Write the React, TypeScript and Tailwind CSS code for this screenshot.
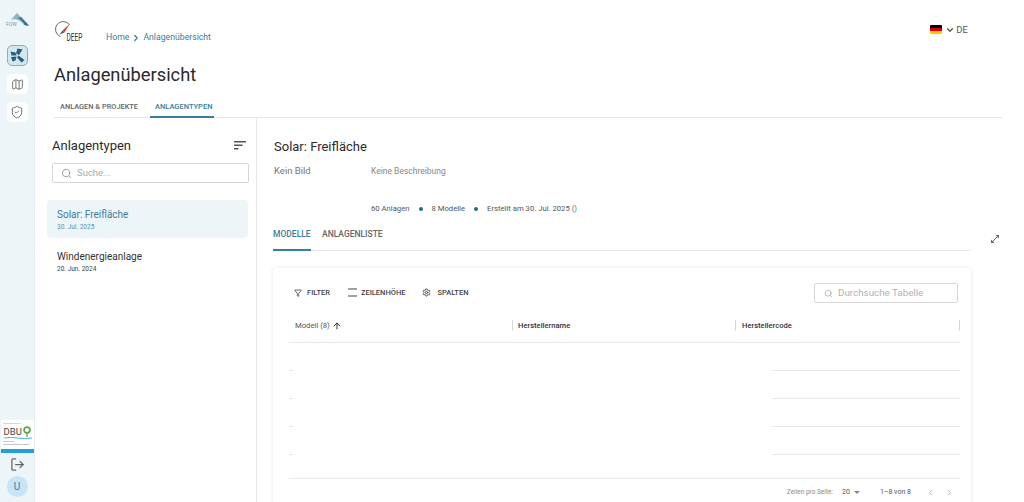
import React from "react";
import { ArrowUp, ChevronDown, ChevronLeft, ChevronRight, LogOut, Map, Search, Settings, ShieldCheck, Filter } from "lucide-react";

function Row() {
  return (
    <div className="h-[28px] flex items-end">
      <div className="w-[483px] flex"><div className="w-[4px] h-px bg-[#e5e5e5]" /></div>
      <div className="w-[188px] h-px bg-[#e8e8e8]" />
    </div>
  );
}

function Sep() {
  return <div className="w-px h-[11px] bg-[#d8d8d8]" />;
}

export default function App() {
  return (
    <div className="w-[1024px] h-[502px] overflow-hidden flex bg-white text-[#222] font-['Roboto',sans-serif]">
      {/* Rail */}
      <aside className="w-[35px] shrink-0 h-full bg-[#eef5f9] flex flex-col items-center border-r border-[#e6edf1]">
        <div className="mt-[12px] h-[16px] w-[24px] flex flex-col items-center">
          <svg width="24" height="16" viewBox="0 0 24 16">
            <path d="M6 7.5 L12 1 L24 13.5 L19 13 Q14 6 6 7.5Z" fill="#8fb6c8" />
            <path d="M12 6 Q17 7 20 13.5 L24 13.5 L16 5 Z" fill="#2f7492" />
            <text x="1" y="14" fontSize="5" fill="#6c98ac" fontFamily="Roboto">FOW</text>
          </svg>
        </div>
        <button className="mt-[17px] w-[21px] h-[21px] rounded-[5px] bg-[#d4e6ee] border border-[#7fb0c6] flex items-center justify-center">
          <svg width="15" height="15" viewBox="0 0 15 15" fill="#245f7c">
            <path d="M7.5 0.5 L12.5 1.5 L9 7 L6 5.5Z" />
            <path d="M0.5 3.5 L5.5 4.5 L6.5 7.5 L1.5 7.5Z" />
            <path d="M8.5 7.5 L14.5 12 L11.5 14.5 L7 9.5Z" />
            <path d="M1 9 L6.5 8.5 L5.5 12.5 L2.5 13.5Z" />
          </svg>
        </button>
        <button className="mt-[8px] w-[21px] h-[20px] rounded-[5px] bg-white flex items-center justify-center">
          <Map size={13} strokeWidth={1.6} color="#666" />
        </button>
        <button className="mt-[8px] w-[21px] h-[20px] rounded-[5px] bg-white flex items-center justify-center">
          <ShieldCheck size={14} strokeWidth={1.6} color="#666" />
        </button>
        <div className="mt-auto w-[33px] h-[29px] bg-white flex flex-col items-start pl-[3px] overflow-hidden">
          <span className="text-[2.5px] text-[#999] mt-[2px] leading-[3px] whitespace-nowrap">gefördert durch</span>
          <div className="flex items-center leading-[10px] mt-[1px]">
            <span className="text-[9.5px] font-normal text-[#444]">DBU</span>
            <svg width="8" height="11" viewBox="0 0 8 11" className="ml-px">
              <circle cx="4" cy="4" r="2.9" fill="none" stroke="#5aa84a" strokeWidth="1.8" />
              <path d="M4 6 V11" stroke="#5aa84a" strokeWidth="1.3" />
            </svg>
          </div>
          <svg width="28" height="2" viewBox="0 0 28 2" className="block">
            <path d="M0 1 Q7 -0.5 14 1 T28 1" fill="none" stroke="#39a7d8" strokeWidth="0.9" />
          </svg>
          <span className="text-[2.5px] text-[#777] mt-[1px] leading-[3px] whitespace-nowrap">Deutsche</span>
          <span className="text-[2.5px] text-[#777] leading-[3px] whitespace-nowrap">Bundesstiftung Umwelt</span>
        </div>
        <div className="w-[33px] h-[4px] bg-[#1ea2d8]" />
        <LogOut size={15} strokeWidth={2} color="#666" className="mt-[4px]" />
        <div className="mt-[4px] mb-[5px] w-[21px] h-[21px] rounded-full bg-[#c6e5f8] flex items-center justify-center text-[10px] text-[#3a7d9c]">U</div>
      </aside>

      {/* Main */}
      <div className="flex-1 min-w-0 flex flex-col">
        <header className="pl-[19px] pr-[22px]">
          <div className="h-[60px] flex items-start">
            <svg width="30" height="24" viewBox="0 0 30 24" className="mt-[20px] ml-[1px]">
              <path d="M5.5 16.5 A7.7 7.7 0 1 1 14.5 4.8" fill="none" stroke="#555" strokeWidth="0.9" />
              <path d="M7.5 10.5 L15 3.5 L9.5 12.5Z" fill="#c8474a" />
              <path d="M4.5 14.5 L7.5 10.5 L9.5 12.5Z" fill="#555" />
              <text transform="translate(11.5 20.5) scale(0.62 1)" fontSize="10.5" fill="#333" fontFamily="Roboto">DEEP</text>
            </svg>
            <nav className="ml-[21px] mt-[31px] flex items-center text-[8.7px] leading-[13px] text-[#3b7d9c]">
              <span>Home</span>
              <ChevronRight size={10} strokeWidth={3} className="mx-[2px]" />
              <span>Anlagenübersicht</span>
            </nav>
            <div className="ml-auto mr-[34px] mt-[23px] flex items-center">
              <div className="w-[12px] h-[9px] flex flex-col rounded-[1px] overflow-hidden">
                <div className="flex-1 bg-black" />
                <div className="flex-1 bg-[#dd0000]" />
                <div className="flex-1 bg-[#ffce00]" />
              </div>
              <ChevronDown size={10} strokeWidth={3} color="#555" className="ml-[3px]" />
              <span className="ml-[1px] text-[9.5px] leading-[13px] text-[#555]">DE</span>
            </div>
          </div>
          <h1 className="h-[28px] text-[18.3px] leading-[30px] font-normal text-[#2a2a2a]">Anlagenübersicht</h1>
          <div className="h-[30px] flex border-b border-[#e8e8e8] text-[7.4px] font-medium">
            <div className="w-[96px] pl-[6px] pt-[13px] text-[#666]">ANLAGEN &amp; PROJEKTE</div>
            <div className="w-[64px] h-[30px] border-b-2 border-[#3b7d9c] pl-[5px] pt-[13px] text-[#3b7d9c] text-[7.5px]">ANLAGENTYPEN</div>
          </div>
        </header>

        <div className="flex-1 min-h-0 flex">
          {/* Left panel */}
          <section className="w-[222px] shrink-0 border-r border-[#e8e8e8] pt-[18px] pl-[12px] pr-[8px]">
            <div className="pl-[5px] pr-[2px] flex items-center justify-between h-[19px]">
              <h2 className="text-[13px] font-normal text-[#2a2a2a] leading-[19px]">Anlagentypen</h2>
              <svg width="12" height="9" viewBox="0 0 12 9" fill="#555">
                <rect x="0" y="0" width="12" height="1.5" />
                <rect x="0" y="3.5" width="8.5" height="1.5" />
                <rect x="0" y="7" width="4.5" height="1.5" />
              </svg>
            </div>
            <div className="mt-[8px] ml-[5px] h-[20px] w-[197px] border border-[#d6d6d6] rounded-[2px] flex items-center pl-[8px]">
              <Search size={11} strokeWidth={2} color="#999" />
              <span className="ml-[5px] text-[9.5px] text-[#a9a9a9]">Suche...</span>
            </div>
            <div className="mt-[17px] h-[38px] rounded-[4px] bg-[#eef5f9] pl-[10px] pt-[8px]">
              <div className="text-[10px] leading-[13px] text-[#3b7d9c]">Solar: Freifläche</div>
              <div className="mt-[2px] text-[6.5px] leading-[9px] text-[#5e93aa]">30. Jul. 2025</div>
            </div>
            <div className="mt-[4px] h-[38px] rounded-[4px] pl-[10px] pt-[8px]">
              <div className="text-[10px] leading-[13px] text-[#333]">Windenergieanlage</div>
              <div className="mt-[2px] text-[6.5px] leading-[9px] text-[#444]">20. Jun. 2024</div>
            </div>
          </section>

          {/* Right */}
          <section className="flex-1 min-w-0 pl-[17px] pt-[21px]">
            <h2 className="text-[13px] leading-[16px] font-normal text-[#2a2a2a]">Solar: Freifläche</h2>
            <div className="mt-[9px] flex h-[14px] items-center">
              <span className="w-[97px] text-[9.5px] text-[#777]">Kein Bild</span>
              <span className="text-[8.5px] text-[#888]">Keine Beschreibung</span>
            </div>
            <div className="mt-[25px] ml-[97px] flex items-center h-[12px] text-[7.7px] text-[#555]">
              <span>60 Anlagen</span>
              <span className="mx-[9px] w-[4px] h-[4px] rounded-full bg-[#1f6d8c]" />
              <span>8 Modelle</span>
              <span className="mx-[9px] w-[4px] h-[4px] rounded-full bg-[#1f6d8c]" />
              <span>Erstellt am 30. Jul. 2025 <span className="text-[#3b7d9c]">()</span></span>
            </div>
            <div className="mt-[7px] -ml-px flex items-start">
              <div className="w-[698px] h-[29px] border-b border-[#e8e8e8] flex text-[8.5px] font-medium">
                <div className="h-[29px] w-[38px] border-b-2 border-[#3b7d9c] text-[#3b7d9c] pt-[7px] leading-[11px]">MODELLE</div>
                <div className="ml-[11px] text-[#666] pt-[7px] leading-[11px]">ANLAGENLISTE</div>
              </div>
              <svg width="10" height="10" viewBox="0 0 10 10" className="ml-[19px] mt-[12px]" fill="none" stroke="#666" strokeWidth="1">
                <path d="M2 8 L8 2" />
                <path d="M5.5 1 H9 V4.5Z" fill="#666" stroke="none" />
                <path d="M1 5.5 V9 H4.5Z" fill="#666" stroke="none" />
              </svg>
            </div>

            {/* Table card */}
            <div className="mt-[17px] -ml-px w-[698px] h-[240px] rounded-t-[4px] shadow-[0_0_4px_rgba(0,0,0,0.1)] pl-[16px] pr-[11px]">
              <div className="h-[50px] flex items-center">
                <div className="flex items-center text-[7.5px] font-medium text-[#444] mb-[1px]">
                  <Filter size={8} strokeWidth={2.4} className="ml-[5px]" />
                  <span className="ml-[5px]">FILTER</span>
                  <svg width="9" height="9" viewBox="0 0 9 9" className="ml-[18px]" fill="#444">
                    <rect x="0" y="0.5" width="9" height="1" />
                    <rect x="0" y="7.5" width="9" height="1" />
                  </svg>
                  <span className="ml-[4px]">ZEILENHÖHE</span>
                  <Settings size={9} strokeWidth={2.4} className="ml-[17px]" />
                  <span className="ml-[6px]">SPALTEN</span>
                </div>
                <div className="ml-auto mr-[2px] w-[144px] h-[20px] border border-[#d9d9d9] rounded-[2px] flex items-center pl-[9px]">
                  <Search size={9} strokeWidth={1.8} color="#a0a0a0" />
                  <span className="ml-[5px] text-[9.8px] text-[#b3b3b3]">Durchsuche Tabelle</span>
                </div>
              </div>
              <div className="h-[25px] flex items-start pt-[2px] border-b border-[#e8e8e8] text-[7.7px] text-[#555]">
                <div className="w-[223px] pl-[6px] flex items-center h-[11px]">
                  <span>Modell (8)</span>
                  <ArrowUp size={10} strokeWidth={2.4} color="#333" className="ml-[2px]" />
                </div>
                <Sep />
                <div className="w-[222px] pl-[5px] font-medium text-[#333] leading-[11px] text-[7.6px]">Herstellername</div>
                <Sep />
                <div className="w-[223px] pl-[6px] font-medium text-[#333] leading-[11px] text-[7.6px]">Herstellercode</div>
                <Sep />
              </div>
              <Row />
              <Row />
              <Row />
              <Row />
              <div className="h-[24px] border-b border-[#e8e8e8]" />
              <div className="h-[27px] flex items-center justify-end text-[6.5px] text-[#888]">
                <span>Zeilen pro Seite:</span>
                <span className="ml-[9px] text-[7px] text-[#555]">20</span>
                <svg width="6" height="3" viewBox="0 0 6 3" className="ml-[4px]" fill="#888"><path d="M0 0H6L3 3Z" /></svg>
                <span className="ml-[20px] text-[7px] text-[#555]">1–8 von 8</span>
                <ChevronLeft size={9} color="#999" className="ml-[15px]" />
                <ChevronRight size={9} color="#999" className="ml-[10px] mr-[6px]" />
              </div>
            </div>
          </section>
        </div>
      </div>
    </div>
  );
}
